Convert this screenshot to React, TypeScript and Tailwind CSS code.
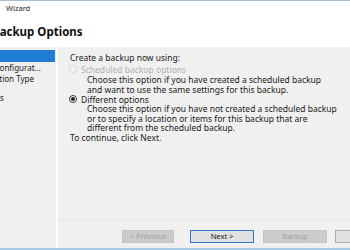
import React from "react";

export default function App() {
  const font = { fontFamily: '"Noto Sans", "Open Sans", sans-serif' };
  return (
    <div className="w-[350px] h-[250px] overflow-hidden bg-[#f0f0f0] flex flex-col text-[#1a1a1a]" style={font}>
      {/* header */}
      <div className="h-[47px] bg-white border-t border-[#a9bfd0] flex flex-col shrink-0 overflow-hidden">
        <div className="text-[7.5px] leading-[10px] pl-[6px] pt-[2px] text-[#222]">Wizard</div>
        <div className="text-[11.5px] font-bold leading-[14px] ml-[-8px] mt-[12px] text-[#111] whitespace-nowrap">Backup Options</div>
      </div>
      <div className="flex flex-1 min-h-0">
        {/* sidebar */}
        <div className="w-[58px] shrink-0 flex flex-col pt-[3px] border-r-2 border-white text-[8px] leading-[11px] overflow-hidden whitespace-nowrap">
          <div className="h-[12px] bg-[#1f7bd4] w-[55px] shrink-0"></div>
          <div className="mt-[0px] ml-[-5.5px]">Configurat...</div>
          <div className="ml-[-20px]">Selection Type</div>
          <div className="ml-[-17.5px] mt-[8px]">Items</div>
        </div>
        {/* content */}
        <div className="flex-1 flex flex-col min-w-0">
          <div className="flex-1 pl-[12px] pt-[6px] text-[8.5px] leading-[9.5px] whitespace-nowrap">
            <div>Create a backup now using:</div>
            <div className="flex items-center mt-[2px] text-[#b0b0b0]">
              <span className="w-[8px] h-[8px] rounded-full border border-[#d8d8d8] bg-[#f4f4f4] mr-[4px] ml-[-1px] shrink-0"></span>
              <span>Scheduled backup options</span>
            </div>
            <div className="pl-[17px] mt-[1px]">
              <div>Choose this option if you have created a scheduled backup</div>
              <div>and want to use the same settings for this backup.</div>
            </div>
            <div className="flex items-center mt-[0.5px]">
              <span className="w-[8px] h-[8px] rounded-full border border-[#333] bg-white mr-[4px] ml-[-1px] flex items-center justify-center shrink-0">
                <span className="w-[4px] h-[4px] rounded-full bg-[#222]"></span>
              </span>
              <span>Different options</span>
            </div>
            <div className="pl-[17px]">
              <div>Choose this option if you have not created a scheduled backup</div>
              <div>or to specify a location or items for this backup that are</div>
              <div>different from the scheduled backup.</div>
            </div>
            <div className="mt-[0px]">To continue, click Next.</div>
          </div>
          {/* footer */}
          <div className="h-[28px] shrink-0 border-t border-[#e6e6e6] flex items-start pt-[9px] pl-[64px] text-[7.5px] overflow-hidden">
            <div className="w-[52px] h-[13px] shrink-0 bg-[#cccccc] border border-[#c4c4c4] text-[#a0a0a0] flex items-center justify-center">&lt; Previous</div>
            <div className="w-[64px] h-[13px] shrink-0 ml-[16px] bg-[#e1e1e1] border-[1.5px] border-[#2a78c8] text-[#111] flex items-center justify-center">Next &gt;</div>
            <div className="w-[64px] h-[13px] shrink-0 ml-[9px] bg-[#cccccc] border border-[#c4c4c4] text-[#a0a0a0] flex items-center justify-center">Backup</div>
            <div className="w-[64px] h-[13px] shrink-0 ml-[8px] bg-[#e1e1e1] border border-[#adadad]"></div>
          </div>
        </div>
      </div>
      <div className="h-[2px] bg-[#a8c8e8] shrink-0"></div>
    </div>
  );
}
